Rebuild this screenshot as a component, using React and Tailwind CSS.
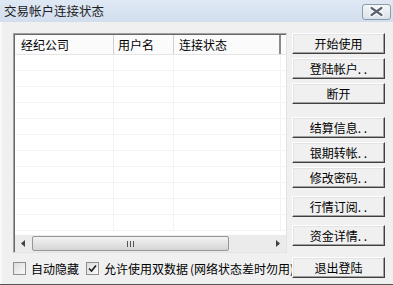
import React from "react";

const font = { fontFamily: '"Noto Sans CJK SC", "Noto Sans", sans-serif' };

function Btn({ children, mt }) {
  return (
    <div
      className={`h-[21px] w-[93px] flex items-center justify-center bg-[#f0f0f0] border border-t-white border-l-white border-r-[#404040] border-b-[#404040] shadow-[inset_-1px_-1px_0_#a0a0a0,inset_1px_1px_0_#e3e3e3] text-[12px] leading-none text-black whitespace-nowrap ${mt}`}
    >
      {children}
    </div>
  );
}

function Check({ checked }) {
  return (
    <div className="w-[13px] h-[13px] shrink-0 border border-[#8e8f8f] bg-gradient-to-br from-[#dcdcdc] to-[#fbfbfb] flex items-center justify-center">
      {checked && (
        <svg width="9" height="9" viewBox="0 0 9 9">
          <path d="M1 4.5 L3.5 7 L8 1.5" stroke="#1a1a1a" strokeWidth="1.6" fill="none" />
        </svg>
      )}
    </div>
  );
}

export default function App() {
  const rows = Array.from({ length: 11 });
  return (
    <div className="w-[393px] h-[285px] bg-[#f0f0f0] flex flex-col overflow-hidden border-b border-b-[#555]" style={font}>
      {/* Title bar */}
      <div className="h-[22px] shrink-0 bg-gradient-to-b from-[#dfe8f4] to-[#d2deee] flex items-center justify-between pl-[4px] pr-[2px]">
        <span className="text-[12.5px] text-[#1e1e1e] leading-none">交易帐户连接状态</span>
        <div className="w-[29px] h-[16px] mt-[1px] rounded-[3px] border border-[#8d9aaa] bg-gradient-to-b from-[#f4f6f9] to-[#dbe2ea] flex items-center justify-center">
          <svg width="15" height="11" viewBox="0 0 15 11">
            <path d="M2.5 2 L12.5 9 M12.5 2 L2.5 9" stroke="#ffffff" strokeWidth="4.4" strokeLinecap="round" />
            <path d="M2.5 2 L12.5 9 M12.5 2 L2.5 9" stroke="#5b6470" strokeWidth="2.2" strokeLinecap="round" />
          </svg>
        </div>
      </div>

      <div className="flex flex-1 bg-[#f0f0f0] border-l-2 border-l-[#f7f9fc]">
        {/* Left */}
        <div className="flex flex-col pl-[11px] pt-[11px] w-[285px] shrink-0">
          <div className="w-[274px] h-[220px] bg-white flex flex-col border border-t-[#a0a0a0] border-l-[#a0a0a0] border-r-[#e3e3e3] border-b-[#e3e3e3] shadow-[inset_1px_1px_0_#696969]">
            {/* header */}
            <div className="h-[20px] flex shrink-0 ml-[1px] mt-[1px] bg-[#fbfbfb] border-b border-b-[#e5e5e5] text-[12px] text-black leading-none">
              <div className="w-[99px] flex items-center pl-[6px] border-r border-r-[#d0d0d0]">经纪公司</div>
              <div className="w-[60px] flex items-center pl-[4px] border-r border-r-[#d0d0d0]">用户名</div>
              <div className="w-[107px] flex items-center pl-[5px] border-r-2 border-r-[#8a8a8a]">连接状态</div>
            </div>
            {/* body */}
            <div className="flex-1 flex flex-col overflow-hidden ml-[1px]">
              {rows.map((_, i) => (
                <div key={i} className="h-[16px] shrink-0 flex border-b border-b-[#f3f3f3]">
                  <div className="w-[99px] border-r border-r-[#f3f3f3]" />
                  <div className="w-[60px] border-r border-r-[#f3f3f3]" />
                  <div className="w-[107px] border-r border-r-[#f3f3f3]" />
                </div>
              ))}
            </div>
            {/* scrollbar */}
            <div className="h-[17px] shrink-0 ml-[1px] bg-[#ebebeb] flex items-center">
              <div className="w-[17px] h-[17px] flex items-center justify-center">
                <svg width="5" height="7" viewBox="0 0 5 7"><path d="M4 0 L0 3.5 L4 7 Z" fill="#404040" /></svg>
              </div>
              <div className="w-[197px] h-[15px] rounded-[2px] border border-[#979797] bg-gradient-to-b from-[#f3f3f3] to-[#d5d5d5] flex items-center justify-center">
                <svg width="7" height="6" viewBox="0 0 7 6">
                  <path d="M0.5 0 V6 M3.5 0 V6 M6.5 0 V6" stroke="#555" strokeWidth="1" />
                </svg>
              </div>
              <div className="flex-1" />
              <div className="w-[17px] h-[17px] flex items-center justify-center">
                <svg width="5" height="7" viewBox="0 0 5 7"><path d="M1 0 L5 3.5 L1 7 Z" fill="#404040" /></svg>
              </div>
            </div>
          </div>
          {/* checkboxes */}
          <div className="flex items-center mt-[9px] text-[12px] text-black leading-none whitespace-nowrap">
            <Check />
            <span className="ml-[5px]">自动隐藏</span>
            <div className="ml-[7px]"><Check checked /></div>
            <span className="ml-[5px]">允许使用双数据<span className="ml-[2px]">(</span>网络状态差时勿用)</span>
          </div>
        </div>

        {/* Right buttons */}
        <div className="flex flex-col ml-[5px] pt-[11px]">
          <Btn mt="">开始使用</Btn>
          <Btn mt="mt-[4px]">登陆帐户. .</Btn>
          <Btn mt="mt-[4px]">断开</Btn>
          <Btn mt="mt-[13px]">结算信息. .</Btn>
          <Btn mt="mt-[4px]">银期转帐. .</Btn>
          <Btn mt="mt-[4px]">修改密码. .</Btn>
          <Btn mt="mt-[8px]">行情订阅. .</Btn>
          <Btn mt="mt-[8px]">资金详情. .</Btn>
          <Btn mt="mt-[11px]">退出登陆</Btn>
        </div>
      </div>
    </div>
  );
}
